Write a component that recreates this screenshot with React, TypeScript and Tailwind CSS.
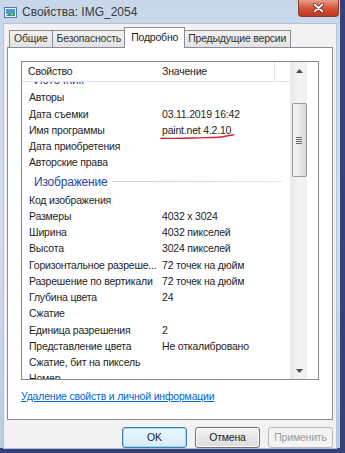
import React from 'react';

type Row = { k: string; v?: string; mark?: boolean };

const sourceRows: Row[] = [
  { k: 'Авторы' },
  { k: 'Дата съемки', v: '03.11.2019 16:42' },
  { k: 'Имя программы', v: 'paint.net 4.2.10', mark: true },
  { k: 'Дата приобретения' },
  { k: 'Авторские права' },
];

const imageRows: Row[] = [
  { k: 'Код изображения' },
  { k: 'Размеры', v: '4032 x 3024' },
  { k: 'Ширина', v: '4032 пикселей' },
  { k: 'Высота', v: '3024 пикселей' },
  { k: 'Горизонтальное разреше...', v: '72 точек на дюйм' },
  { k: 'Разрешение по вертикали', v: '72 точек на дюйм' },
  { k: 'Глубина цвета', v: '24' },
  { k: 'Сжатие' },
  { k: 'Единица разрешения', v: '2' },
  { k: 'Представление цвета', v: 'Не откалибровано' },
  { k: 'Сжатие, бит на пиксель' },
  { k: 'Номер' },
];

function PropRow({ row }: { row: Row }) {
  return (
    <div className="relative flex h-[16.25px] shrink-0 items-center whitespace-nowrap text-[#1e1e1e]">
      <span className="w-[140px] shrink-0 overflow-hidden pl-[7px]">{row.k}</span>
      <span>{row.v}</span>
      {row.mark && (
        <svg className="absolute left-[138px] top-[10px]" width="76" height="7" viewBox="0 0 76 7">
          <path d="M1 5.2 C 12 5.6, 24 5.4, 34 5 S 52 4.6, 58 4.2 S 70 2.4, 74 1.6" fill="none" stroke="#d8202a" strokeWidth="1.4" strokeLinecap="round" />
        </svg>
      )}
    </div>
  );
}

function GroupHeader({ title, className = '' }: { title: string; className?: string }) {
  return (
    <div className={`flex h-[21px] shrink-0 items-center gap-[5px] pl-[12px] pr-[8px] ${className}`}>
      <span className="text-[12px] text-[#2447a8]">{title}</span>
      <div className="h-px flex-1 bg-gradient-to-r from-[#c5d0e6] to-[#e4e9f3]" />
    </div>
  );
}

function Btn({ label, kind }: { label: string; kind?: 'default' | 'disabled' }) {
  const base = 'flex h-[21px] w-[65px] items-center justify-center rounded-[3px] border';
  if (kind === 'default')
    return (
      <div className={`${base} border-[#3c7fb1] bg-gradient-to-b from-[#eaf6fd] to-[#d4ecf9] text-[#1e1e1e] shadow-[inset_0_0_0_1px_#a4d8f3]`}>
        {label}
      </div>
    );
  if (kind === 'disabled')
    return <div className={`${base} border-[#b5b8bb] bg-[#f4f4f4] text-[#9a9a9a]`}>{label}</div>;
  return (
    <div className={`${base} border-[#707070] bg-gradient-to-b from-[#f4f4f4] to-[#dcdcdc] text-[#1e1e1e] shadow-[inset_0_0_0_1px_#fbfbfb]`}>
      {label}
    </div>
  );
}

function Tab({ label, active }: { label: string; active?: boolean }) {
  if (active)
    return (
      <div className="relative z-10 -mx-[2px] -mb-px flex h-[21px] items-center border border-b-0 border-[#898c95] bg-white px-[6px] text-[#1e1e1e]">
        {label}
      </div>
    );
  return (
    <div className="flex h-[17px] items-center border border-b-0 border-[#898c95] bg-gradient-to-b from-[#f2f2f2] to-[#e2e2e2] px-[4px] text-[#333] [&+&]:border-l-0">
      {label}
    </div>
  );
}

export default function App() {
  return (
    <div
      className="flex h-[453px] w-[345px] items-start bg-[#34417a] text-[10.5px] tracking-[-0.2px]"
      style={{ fontFamily: '"Liberation Sans", Arial, sans-serif' }}
    >
      <div className="flex h-[448px] w-[340px] flex-col bg-gradient-to-b from-[#c8d7ea] via-[#d3dfee] to-[#b9cce4] px-[3px] pb-[3px]">
        {/* title bar */}
        <div className="relative flex h-[23px] shrink-0 items-center gap-[5px] pl-[1px]">
          <svg width="13" height="11" viewBox="0 0 13 11" className="mt-[1px]">
            <rect x="0.5" y="0.5" width="12" height="10" fill="#e8f2fb" stroke="#4d7fae" />
            <rect x="2" y="2" width="9" height="5" fill="#4e9ad6" />
            <path d="M2 9 L5 6 L8 8 L11 5 L11 9 Z" fill="#3f9a52" />
          </svg>
          <span className="text-[12px] tracking-normal text-[#3a3a3a]">Свойства: IMG_2054</span>
          <div className="absolute right-[-2px] top-0 flex h-[17px] w-[41px] items-center justify-center rounded-b-[4px] border border-t-0 border-[#8a3a2c] bg-gradient-to-b from-[#e5a08c] via-[#d2553b] to-[#c0391f]">
            <svg width="11" height="10" viewBox="0 0 11 10">
              <path d="M1.5 1.5 L9.5 8.5 M9.5 1.5 L1.5 8.5" stroke="#5a1a10" strokeWidth="3.2" strokeLinecap="round" />
              <path d="M1.5 1.5 L9.5 8.5 M9.5 1.5 L1.5 8.5" stroke="#ffffff" strokeWidth="1.8" strokeLinecap="round" />
            </svg>
          </div>
        </div>

        {/* dialog body */}
        <div className="flex flex-1 flex-col border border-[#b4c3d6] bg-[#f2f2f2] px-[3px]">
          {/* tabs */}
          <div className="mt-[3px] flex items-end pl-[2px]">
            <Tab label="Общие" />
            <Tab label="Безопасность" />
            <Tab label="Подробно" active />
            <Tab label="Предыдущие версии" />
          </div>

          <div className="flex h-[373px] flex-col border border-[#898c95] bg-white px-[13px] pt-[13px]">
            {/* list view */}
            <div className="flex h-[319px] border border-[#828790] bg-white">
              <div className="flex w-[268px] flex-col overflow-hidden">
                <div className="flex h-[20px] shrink-0 items-center border-b border-[#e5e5e5] text-[#1e1e1e]">
                  <span className="w-[133px] pl-[6px]">Свойство</span>
                  <span className="flex h-full w-[120px] items-center border-r border-[#e5e5e5] pl-[7px]">Значение</span>
                </div>
                <div className="flex flex-col overflow-hidden">
                  <GroupHeader title="Источник" className="-mt-[13px]" />
                  {sourceRows.map((r) => (
                    <PropRow key={r.k} row={r} />
                  ))}
                  <GroupHeader title="Изображение" />
                  {imageRows.map((r) => (
                    <PropRow key={r.k} row={r} />
                  ))}
                </div>
              </div>
              {/* scrollbar */}
              <div className="flex w-[17px] flex-col items-center border-l border-[#eaeaea] bg-gradient-to-r from-[#e8e8e8] via-[#f4f4f4] to-[#eeeeee]">
                <div className="flex h-[17px] w-full items-center justify-center">
                  <svg width="7" height="4" viewBox="0 0 7 4"><path d="M0 4 L3.5 0 L7 4 Z" fill="#4d4d4d" /></svg>
                </div>
                <div className="mt-[24px] flex h-[74px] w-[15px] items-center justify-center rounded-[2px] border border-[#979797] bg-gradient-to-r from-[#f3f3f3] via-[#e9e9e9] to-[#d8d8d8]">
                  <div className="flex flex-col gap-[1px]">
                    <div className="h-px w-[6px] bg-[#6d6d6d]" />
                    <div className="h-px w-[6px] bg-[#6d6d6d]" />
                    <div className="h-px w-[6px] bg-[#6d6d6d]" />
                    <div className="h-px w-[6px] bg-[#6d6d6d]" />
                  </div>
                </div>
                <div className="flex-1" />
                <div className="flex h-[17px] w-full items-center justify-center">
                  <svg width="7" height="4" viewBox="0 0 7 4"><path d="M0 0 L3.5 4 L7 0 Z" fill="#4d4d4d" /></svg>
                </div>
              </div>
            </div>

            <div className="mt-[9px] text-[#0066cc] underline">Удаление свойств и личной информации</div>
          </div>

          {/* buttons */}
          <div className="mt-[7px] flex justify-end gap-[8px]">
            <Btn label="OK" kind="default" />
            <Btn label="Отмена" />
            <Btn label="Применить" kind="disabled" />
          </div>
        </div>
      </div>
    </div>
  );
}
